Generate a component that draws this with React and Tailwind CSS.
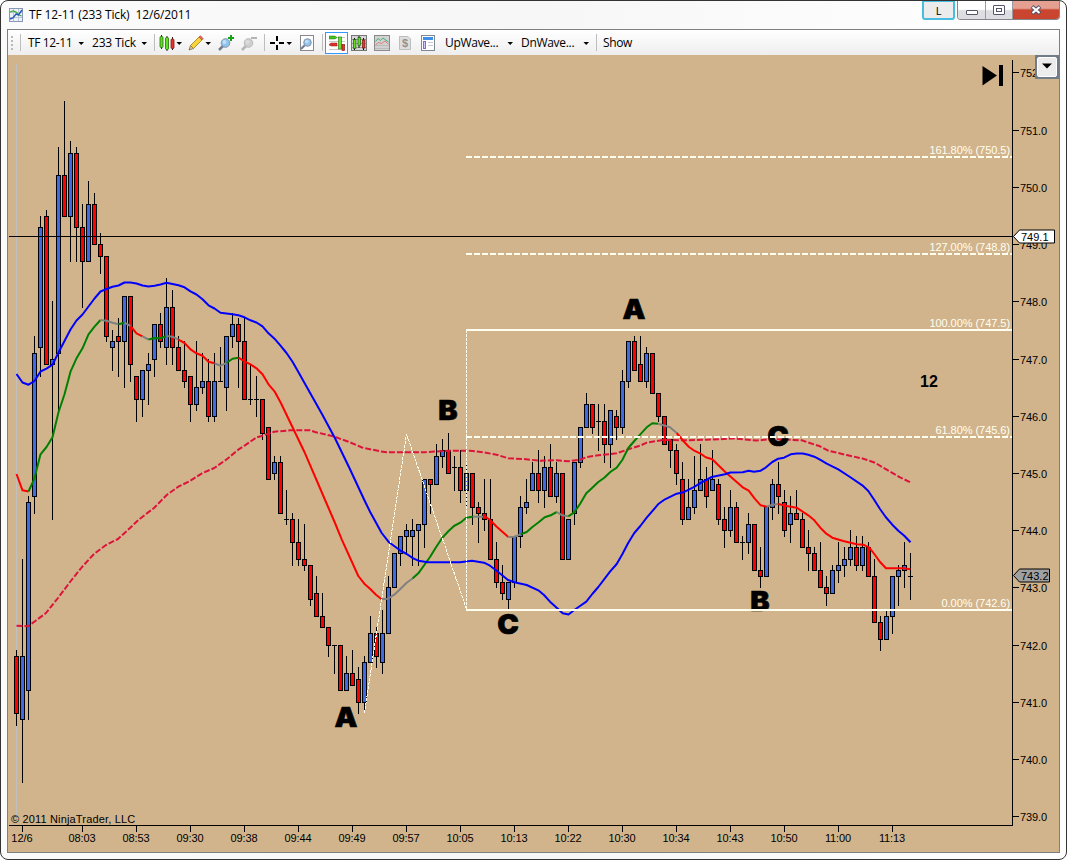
import React from 'react';

// [color, body top, body bottom, high, low], one candle every 6px
const CANDLES = [
  ['r', 656, 713, 650, 726], ['b', 656, 719, 559, 783], ['b', 502, 690, 496, 720], ['b', 353, 496, 336, 514], ['b', 227, 347, 216, 377],
  ['r', 216, 364, 210, 364], ['b', 359, 364, 301, 520], ['b', 175, 353, 147, 411], ['r', 175, 216, 101, 216], ['b', 153, 216, 141, 262],
  ['r', 153, 227, 147, 262], ['r', 227, 261, 204, 308], ['b', 204, 261, 181, 261], ['r', 204, 244, 193, 244], ['r', 244, 256, 233, 274],
  ['r', 256, 336, 256, 342], ['b', 341, 347, 330, 371], ['r', 336, 341, 318, 377], ['b', 296, 341, 296, 388], ['r', 296, 364, 296, 382],
  ['r', 376, 399, 376, 422], ['b', 370, 399, 370, 417], ['b', 364, 370, 353, 405], ['b', 324, 359, 324, 377], ['r', 324, 341, 313, 348],
  ['b', 307, 347, 278, 365], ['r', 307, 347, 290, 365], ['r', 347, 370, 336, 370], ['r', 370, 381, 341, 388], ['r', 376, 404, 376, 422],
  ['b', 387, 404, 341, 411], ['b', 381, 387, 353, 394], ['r', 381, 416, 359, 422], ['b', 381, 416, 353, 422], ['d', 381, 381, 347, 381],
  ['b', 336, 387, 336, 411], ['b', 324, 336, 313, 348], ['r', 324, 341, 318, 388], ['r', 341, 399, 318, 399], ['d', 399, 399, 365, 405],
  ['d', 399, 399, 376, 417], ['r', 399, 433, 399, 440], ['r', 427, 479, 427, 479], ['b', 462, 473, 456, 480], ['r', 462, 513, 456, 513],
  ['d', 519, 519, 490, 525], ['r', 519, 542, 513, 566], ['r', 542, 559, 519, 566], ['r', 559, 565, 524, 571], ['r', 565, 599, 565, 606],
  ['r', 593, 616, 576, 616], ['r', 616, 627, 593, 627], ['r', 627, 645, 627, 657], ['d', 645, 645, 645, 674], ['r', 645, 690, 645, 690],
  ['b', 673, 690, 656, 690], ['r', 673, 685, 650, 685], ['r', 679, 702, 667, 714], ['b', 662, 702, 656, 711], ['b', 633, 662, 616, 662],
  ['r', 633, 656, 627, 668], ['b', 633, 662, 610, 674], ['b', 587, 633, 576, 633], ['b', 553, 587, 553, 587], ['b', 536, 553, 536, 566],
  ['b', 530, 536, 524, 554], ['b', 530, 536, 519, 566], ['b', 524, 530, 524, 566], ['b', 479, 524, 479, 548], ['r', 479, 484, 479, 514],
  ['b', 456, 484, 444, 484], ['b', 450, 456, 439, 468], ['r', 450, 473, 433, 473], ['d', 467, 467, 456, 491], ['r', 467, 490, 450, 503],
  ['b', 473, 490, 465, 506], ['r', 473, 507, 473, 525], ['r', 507, 513, 502, 543], ['r', 513, 519, 479, 531], ['r', 519, 559, 479, 559],
  ['r', 559, 582, 542, 588], ['r', 582, 593, 565, 600], ['b', 582, 599, 582, 609], ['b', 536, 582, 536, 588], ['b', 507, 536, 496, 548],
  ['b', 502, 507, 479, 514], ['b', 473, 490, 462, 490], ['r', 473, 490, 450, 503], ['b', 467, 490, 456, 508], ['r', 467, 496, 444, 496],
  ['b', 473, 496, 462, 503], ['r', 473, 559, 473, 559], ['b', 519, 559, 519, 559], ['b', 462, 513, 462, 525], ['b', 427, 462, 427, 468],
  ['b', 404, 427, 393, 427], ['r', 404, 427, 404, 434], ['d', 421, 421, 404, 451], ['r', 421, 444, 404, 463], ['b', 410, 444, 410, 468],
  ['r', 416, 427, 410, 440], ['b', 381, 427, 370, 434], ['b', 341, 381, 341, 388], ['r', 341, 370, 336, 370], ['r', 364, 381, 336, 381],
  ['b', 353, 381, 347, 388], ['r', 353, 393, 353, 393], ['r', 393, 416, 393, 422], ['r', 416, 444, 416, 444], ['r', 439, 450, 439, 468],
  ['r', 450, 473, 444, 485], ['r', 479, 519, 462, 525], ['b', 507, 519, 479, 519], ['b', 490, 507, 456, 514], ['b', 479, 490, 444, 490],
  ['r', 479, 496, 467, 508], ['b', 479, 490, 450, 490], ['r', 484, 519, 479, 525], ['r', 519, 530, 507, 548], ['b', 507, 530, 490, 537],
  ['r', 507, 542, 502, 542], ['d', 542, 542, 536, 560], ['b', 524, 542, 513, 554], ['r', 524, 570, 524, 570], ['r', 570, 576, 547, 588],
  ['b', 506, 576, 506, 576], ['b', 484, 507, 479, 520], ['r', 484, 496, 462, 514], ['r', 502, 530, 490, 537], ['b', 513, 524, 496, 543],
  ['r', 513, 519, 490, 519], ['r', 519, 547, 513, 547], ['r', 547, 553, 530, 571], ['r', 553, 570, 547, 570], ['r', 570, 587, 542, 587],
  ['r', 587, 593, 576, 606], ['b', 570, 593, 565, 593], ['b', 565, 570, 542, 583], ['b', 559, 565, 547, 577], ['b', 547, 559, 530, 566],
  ['r', 547, 565, 536, 571], ['b', 547, 565, 536, 571], ['r', 547, 576, 542, 576], ['r', 576, 622, 559, 622], ['r', 622, 639, 616, 651],
  ['b', 616, 639, 610, 639], ['b', 576, 616, 576, 634], ['b', 570, 576, 565, 606], ['b', 565, 570, 542, 588], ['d', 576, 576, 553, 600],
];

const SLOW_MA =
  '16.5,374 22.5,382.5 28.5,384.7 34.5,381 40.5,371.5 46.5,368.7 52.5,364.7 58.5,352.5 64.5,341 70.5,329.5 76.5,320.5 82.5,314.5 88.5,306.5 94.5,298.5 100.5,291.5 106.5,289 112.5,286.7 118.5,285.5 124.5,282.5 130.5,282.5 136.5,283.5 142.5,285.5 148.5,286.5 154.5,285.7 160.5,284.5 166.5,282.8 172.5,284 178.5,285.3 184.5,287.3 190.5,291.3 196.5,294.5 202.5,299.3 208.5,305.3 214.5,308.5 220.5,312.7 232.5,314.3 238.5,315.3 244.5,317.3 250.5,320.3 256.5,322.5 262.5,326.3 268.5,333.3 274.5,338.7 280.5,345.7 286.5,353 292.5,361.7 298.5,372.3 310,392.7 322.5,415 335,438.3 350,469.3 364.3,500 370.3,512.3 381.7,533 389,542.3 400,550.3 406.7,554 413.3,558.3 418.3,560.7 428,562.3 460,562.3 472,560.7 484,562.7 490,565.7 496.7,570.7 508,580 514.3,582.3 526.7,585 538.3,590.3 544,595 550,601.7 556.7,607.7 562.7,613.3 568.5,614.5 574.3,610 580,606 586.3,601.7 592.3,594 598.3,587 610,571.7 616.7,564 622.3,554.3 628.3,542.7 634.3,533 640.3,526 646.7,517.7 658.7,503.7 665,499.3 676.7,493.7 683.3,492.3 693.3,487.3 700,483.3 711.7,477 725,474.3 730.3,472.5 742.7,472.3 748.7,470.7 754,471.7 760.7,470.7 766,467.3 772.3,462 778.3,458.7 784,457.7 790.7,454.3 796.7,453.5 802.7,453.5 808.3,454.7 814.3,456.7 820,459.7 826.7,463.7 838.3,469.3 850,477 862.3,485.3 868.3,491 874.3,500 880,509 885.7,517 892.3,524.7 898.3,530.7 904.3,535.7 910.5,542.3';

const LONG_MA =
  '16.5,625.7 28,626.3 35.7,620.7 46,613 58,598 70,582 82,567 94,554 106,545 118,539 130,528 138.3,520 154.3,507.7 166.7,495 178.3,486.7 190,481 202,473.3 214.3,468 226.7,459.3 238.3,449.7 245,445.3 256.7,437.3 261.7,436 274.3,431.7 290,430.3 310,430.3 315,432 333.3,436.3 350,442.3 362,447.5 380,451.3 386.7,452.3 424.3,452.3 448.3,450.7 470,450.7 483.3,452.3 496.7,454.7 508.3,458.3 523.3,459 540,460.7 556.7,460.3 568.3,461.3 580,459.7 586.7,457 598.3,455.3 616.7,453.3 628.3,449.3 640,445.7 646.7,442.7 663.3,440 690,440.3 706.7,439.7 720,439.3 733.3,438.3 756.7,440.5 773,439 801.7,440.3 820,446.3 828.3,450.7 846.7,455 863.3,458.7 875,462.7 886.7,469.7 900,477.3 910.3,482.3';

const FAST_MA = [
  ['red', '16.5,474 22.5,490.3 28.5,491.5'],
  ['green', '28.5,491.5 34.5,478.3 40.5,454.3 46.5,447 52.5,437.3 58.5,412.3 64.5,394.3 70.5,371.7 76.5,358.3 82.5,348.3 88.5,334.3 94.5,326.7 100.5,320'],
  ['gray', '100.5,320 106.5,320.7 112.5,322.7 118.5,324.3'],
  ['green', '118.5,324.3 124.5,322.7'],
  ['gray', '124.5,322.7 130.5,326'],
  ['red', '130.5,326 136.5,333.3 142.5,336.3'],
  ['gray', '142.5,336.3 148.5,339.5'],
  ['green', '148.5,339.5 154.5,338 160.5,338.3 166.5,336'],
  ['gray', '166.5,336 172.5,336.7 178.5,339.7'],
  ['red', '178.5,339.7 184.5,343 190.5,349.3 196.5,353.3 202.5,355.7 208.5,361.7 214.5,363.3'],
  ['gray', '214.5,363.3 220.5,365.7 226.5,363'],
  ['green', '226.5,363 232.5,358.7 238.5,357.7'],
  ['red', '238.5,357.7 244.5,361.3 250.5,364.3 256.5,368.3 262.5,374.3 268.5,384.3 274.5,391.3 281,403.3 304.3,451.7 325.3,500.5 335,523 341.7,539.3 358.3,576 364.3,583.7 370,588.7 376,594.7 381.7,599.3'],
  ['gray', '381.7,599.3 388,598.7 394.3,594.7 400.3,589 406.7,582.7 412.5,578.5'],
  ['green', '412.5,578.5 418.3,573.3 424.3,565 430,557 435.7,547.7 442.3,537.7 448.3,531.3 454,526 460.3,522.7 466.3,517.7 472.7,516.7'],
  ['gray', '472.7,516.7 483.3,516.7'],
  ['red', '483.3,516.7 486,517 490.3,520.3 496.7,526.7 508.3,537'],
  ['gray', '508.3,537 514.3,536.7 520.7,534.3'],
  ['green', '520.7,534.3 526.7,532 532.7,526.7 538.7,522.3 544.7,517.3 550.7,515.3 556.7,512'],
  ['gray', '556.7,512 562.3,515.3 568.3,516.3'],
  ['green', '568.3,516.3 574.3,512.3 580,504 586.3,493.3 592.3,487.7 598.3,482 604.3,477.7 610.3,472 616.7,467.7 622.3,460 628.3,448 634.3,441 640.3,434.3 646.7,427.3 652.3,423.3 658.3,423.7'],
  ['gray', '658.3,423.7 670,427.3 676.7,433'],
  ['red', '676.7,433 683.3,441 689,447 694.3,450.7 700,453.3 705.7,457.3 712.3,459.3 725,471.7 742.7,487.3 748.7,490.7 754.7,498.7 760.7,505.3 766.7,506.7'],
  ['gray', '766.7,506.7 772.3,504.7 778.3,504'],
  ['red', '778.3,504 786.7,506 796.7,507.7 808.3,515.3 814.3,520.3 820.3,527.7 826.3,533.7 832.3,537.7 843.3,541 856.7,544.3 863.3,544.7 869.3,547.7 874.3,554 880.3,562.3 886,568.3 903.3,568.3 910.3,569.3'],
];

const FIBS = [
  { y: 157, label: '161.80% (750.5)', dashed: true },
  { y: 254, label: '127.00% (748.8)', dashed: true },
  { y: 330, label: '100.00% (747.5)', dashed: false },
  { y: 437, label: '61.80% (745.6)', dashed: true },
  { y: 610, label: '0.00% (742.6)', dashed: false },
];

const PRICES = [752, 751, 750, 749, 748, 747, 746, 745, 744, 743, 742, 741, 740, 739];

const TIMES = ['08:03', '08:53', '09:30', '09:38', '09:44', '09:49', '09:57', '10:05', '10:13', '10:22', '10:30', '10:34', '10:43', '10:50', '11:00', '11:13'];

const WAVES = [
  ['A', 346, 727],
  ['B', 448, 420],
  ['C', 508, 634],
  ['A', 634, 319],
  ['B', 760, 611],
  ['C', 778, 446],
];

const priceY = (price) => Math.round(72.49 + (752 - price) * 57.21);

const Candle = ({ x, data }) => {
  const [kind, top, bottom, high, low] = data;
  return (
    <g>
      <rect x={x} y={high} width="1" height={Math.max(low - high, 1)} fill="#000" />
      {kind === 'd' ? (
        <rect x={x - 2} y={top} width="5" height="1" fill="#000" />
      ) : (
        <>
          <rect x={x - 2} y={top} width="5" height={bottom - top + 1} fill="#000" />
          <rect x={x - 1} y={top + 1} width="3" height={bottom - top - 1} fill={kind === 'r' ? '#ff0000' : '#4169e1'} />
        </>
      )}
    </g>
  );
};

const PriceTag = ({ y, right, fill, text }) => (
  <g>
    <path d={`M1013.5 ${y} L1019.5 ${y - 6.5} H${right} V${y + 6.5} H1019.5 Z`} fill={fill} stroke="#000" />
    <text x="1021" y={y + 4.5} fill="#000">{text}</text>
  </g>
);

const Chart = () => (
  <svg viewBox="8 55 1051 797" width="1051" height="797" className="block bg-[#d2b48c] font-['Liberation_Sans',sans-serif] text-[11px]">
    <rect x="16" y="64" width="1" height="754" fill="#c0c0c0" />
    <g shapeRendering="crispEdges">
      {CANDLES.map((c, i) => (
        <Candle key={i} x={16 + i * 6} data={c} />
      ))}
    </g>

    {/* Moving averages */}
    <g fill="none" strokeWidth="2" strokeLinejoin="round">
      <polyline points={LONG_MA} stroke="#dc143c" strokeDasharray="6 2" />
      {FAST_MA.map(([stroke, points]) => (
        <polyline key={points} points={points} stroke={stroke} />
      ))}
      <polyline points={SLOW_MA} stroke="#0000ff" />
    </g>

    {WAVES.map(([letter, x, y]) => (
      <text
        key={x}
        transform={`translate(${x} ${y}) scale(1.07 1)`}
        textAnchor="middle"
        stroke="#000"
        strokeWidth=".6"
        className="font-['Inter',sans-serif] text-[27px] font-black"
      >
        {letter}
      </text>
    ))}
    <text x="920" y="387" className="text-[16px] font-bold">12</text>

    {/* Fibonacci extensions */}
    <g stroke="#fffff0" fill="none" shapeRendering="crispEdges">
      <path d="M364.5 713 L406.5 434 L466.5 609" strokeDasharray="3 1" />
      <path d="M466.5 330 V610" strokeDasharray="3 1" />
      {FIBS.map((f) => (
        <path key={f.y} d={`M466 ${f.y} H1012`} strokeWidth="2" strokeDasharray={f.dashed ? '6 2' : undefined} />
      ))}
    </g>
    {FIBS.map((f) => (
      <text key={f.y} x="1010" y={f.y - 3} textAnchor="end" fill="#fffff0" className="tracking-[-0.05px]">{f.label}</text>
    ))}

    {/* Axes */}
    <g fill="#000" shapeRendering="crispEdges">
      <rect x="9" y="236" width="1004" height="1" />
      <rect x="1012" y="60" width="1" height="766" />
      <rect x="9" y="825" width="1004" height="1" />
      <rect x="22" y="826" width="1" height="6" />
      {TIMES.map((t, i) => (
        <rect key={t} x={82 + i * 54} y="826" width="1" height="6" />
      ))}
      {PRICES.map((p) => (
        <rect key={p} x="1013" y={priceY(p)} width="6" height="1" />
      ))}
    </g>
    {PRICES.map((p) => (
      <text key={p} x="1020" y={priceY(p) + 5} className="tracking-[-0.1px]">{p.toFixed(1)}</text>
    ))}
    <text x="22" y="842" textAnchor="middle">12/6</text>
    {TIMES.map((t, i) => (
      <text key={t} x={82 + i * 54} y="842" textAnchor="middle" className="tracking-[-0.1px]">{t}</text>
    ))}
    <text x="11" y="823" className="tracking-[0.16px]">© 2011 NinjaTrader, LLC</text>

    <PriceTag y={236.5} right={1054.5} fill="#fff" text="749.1" />
    <PriceTag y={575.5} right={1049.5} fill="#a0a0a0" text="743.2" />

    <path d="M982.5 66 L997 75.5 L982.5 85.5 Z" />
    <rect x="999" y="65" width="4" height="21" />
  </svg>
);

const Arrow = () => (
  <svg viewBox="0 0 8 16" className="h-4 w-2 shrink-0">
    <path d="M1.5 7 H7 L4.2 10 Z" />
  </svg>
);

const Sep = ({ className = '' }) => <div className={`h-[17px] w-px shrink-0 bg-[#bdbdbd] ${className}`} />;

const Icon = ({ className = '', children }) => (
  <svg viewBox="0 0 16 16" className={`h-4 w-4 shrink-0 ${className}`}>{children}</svg>
);

const Lens = ({ gray }) => (
  <>
    <path d="M1 15 L5.5 10.5" stroke={gray ? '#b5b5b5' : '#6f7f90'} strokeWidth="2.5" />
    <circle cx="7.5" cy="8" r="4.3" fill={gray ? '#cfcfcf' : '#8fc4ee'} stroke={gray ? '#b8b8b8' : '#8795a5'} />
    <circle cx="6.5" cy="7" r="2" fill={gray ? '#dcdcdc' : '#bfe0f8'} />
  </>
);

const Toolbar = () => (
  <div className="flex h-[25px] shrink-0 items-center bg-gradient-to-b from-white to-[#eeeeee] font-['Open_Sans',sans-serif] text-[12px] leading-4 text-black">
    <div className="ml-[3px] grid w-[9px] gap-[2px]">
      {[0, 1, 2, 3].map((i) => (
        <div key={i} className="h-[2px] w-[2px] bg-[#b9b9b9]" />
      ))}
    </div>
    <Sep />
    <div className="ml-[7px] w-[49px] whitespace-nowrap tracking-[-0.38px]">TF 12-11</div>
    <Arrow />
    <div className="ml-[7px] w-[48px] whitespace-nowrap tracking-[-0.2px]">233 Tick</div>
    <Arrow />
    <Sep className="ml-[6px]" />
    {/* Chart style */}
    <Icon className="ml-1">
      <path d="M2.5 0V14M8 1V16M13.5 2V15" stroke="#222" />
      <rect x="1" y="1.5" width="3" height="11" rx="1" fill="#5fe01d" stroke="#236b10" strokeWidth=".8" />
      <rect x="6.5" y="2.5" width="3" height="12" rx="1" fill="#5fe01d" stroke="#236b10" strokeWidth=".8" />
      <rect x="12" y="4" width="3" height="9.5" rx="1" fill="#e8342c" stroke="#7c1714" strokeWidth=".8" />
    </Icon>
    <Arrow />
    {/* Drawing tools */}
    <Icon className="ml-[5px]">
      <path d="M1 15 L2.5 10.5 L5.5 13.5 Z" fill="#d8c4a0" stroke="#6b5a33" strokeWidth=".7" />
      <path d="M2.5 10.5 L11 2 L14 5 L5.5 13.5 Z" fill="#f6d43a" stroke="#a07d1a" strokeWidth=".8" />
      <path d="M11 2 L12.5 .8 L15.2 3.6 L14 5 Z" fill="#ec6d62" stroke="#a8403b" strokeWidth=".6" />
    </Icon>
    <Arrow />
    <Icon className="ml-[6px]">
      <Lens />
      <path d="M13 0V6M10 3H16" stroke="#16a316" strokeWidth="2" />
    </Icon>
    <Icon className="ml-[7px]">
      <Lens gray />
      <path d="M10 3H16" stroke="#b5b5b5" strokeWidth="2" />
    </Icon>
    <Sep className="ml-[7px]" />
    {/* Crosshair */}
    <Icon className="ml-1">
      <path d="M8 1V6M8 10V15M1 8H6M10 8H15" stroke="#000" strokeWidth="2" shapeRendering="crispEdges" />
    </Icon>
    <Arrow />
    <Icon className="ml-[6px]">
      <rect x="1.5" y=".5" width="13" height="15" fill="#fff" stroke="#888" />
      <path d="M2 14 L6 10" stroke="#6f7f90" strokeWidth="2.2" />
      <circle cx="8.5" cy="7.5" r="3.8" fill="#8fc4ee" stroke="#8795a5" />
      <circle cx="7.8" cy="6.6" r="1.8" fill="#bfe0f8" />
    </Icon>
    <Sep className="ml-[7px]" />
    <div className="ml-[2px] flex h-[22px] w-[23px] shrink-0 items-center justify-center border border-[#3399ff] bg-white">
      <Icon>
        <path d="M0 2.5H16M0 6.5H16M0 10.5H16M0 14.5H16" stroke="#c9c9c9" />
        <path d="M0 1H6L8 2.5L6 4H0Z" fill="#43c01c" stroke="#277a12" strokeWidth=".5" />
        <path d="M0 9.5L2 8H8V11H2Z" fill="#e23128" stroke="#8c1914" strokeWidth=".5" />
        <rect x="9.5" y="2" width="3" height="12" fill="#6be02a" stroke="#2d7c16" strokeWidth=".7" />
        <rect x="13" y="9.5" width="2.5" height="6" fill="#e8342c" stroke="#8c1914" strokeWidth=".7" />
      </Icon>
    </div>
    <Icon className="ml-[3px]">
      <rect x=".5" y=".5" width="15" height="15" fill="#d5d5d5" stroke="#777" />
      <path d="M1 4.5H15M1 8.5H15M1 12.5H15" stroke="#999" />
      <path d="M3.5 3V15M8 1V13M12.5 3V15" stroke="#111" />
      <rect x="2.5" y="4.5" width="2.4" height="9" fill="#5fe01d" stroke="#1d5e0c" strokeWidth=".7" />
      <rect x="7" y="2.5" width="2.4" height="8" fill="#5fe01d" stroke="#1d5e0c" strokeWidth=".7" />
      <rect x="11.5" y="5" width="2.4" height="8" fill="#e8342c" stroke="#7c1714" strokeWidth=".7" />
    </Icon>
    <Icon className="ml-[7px]">
      <rect x=".5" y=".5" width="15" height="15" fill="#d2d2d2" stroke="#8a8a8a" />
      <path d="M1 10.5H15M1 13.5H15" stroke="#bbb" />
      <path d="M1.5 6.5 L4 3.5 L6.5 5.5 L9 3 L14.5 7" fill="none" stroke="#39b57a" />
      <path d="M1.5 10 L4.5 7.5 L7.5 8.5 L11 6 L14.5 9" fill="none" stroke="#df7b7b" />
    </Icon>
    <Icon className="ml-[7px]">
      <path d="M2.5 1.5 H11 L13.5 4 V14.5 H2.5 Z" fill="#dedede" stroke="#bdbdbd" />
      <text x="8" y="12" textAnchor="middle" fill="#929292" className="font-['Liberation_Sans',sans-serif] text-[11px] font-bold">$</text>
    </Icon>
    <Icon className="ml-[7px]">
      <rect x="1.5" y=".5" width="13" height="15" fill="#fff" stroke="#7f8794" />
      <rect x="3" y="2" width="10" height="3" fill="#3d8fe8" />
      <rect x="3.5" y="6.5" width="2" height="7" fill="#d9c7ff" stroke="#9361e6" />
      <path d="M8 7.5H13M8 10.5H13" stroke="#c2cad8" />
    </Icon>
    <div className="ml-[9px] w-[61px] whitespace-nowrap tracking-[-0.3px]">UpWave...</div>
    <Arrow />
    <div className="ml-[7px] w-[61px] whitespace-nowrap tracking-[-0.3px]">DnWave...</div>
    <Arrow />
    <Sep className="ml-[6px]" />
    <div className="ml-[6px] tracking-[-0.4px]">Show</div>
  </div>
);

const TitleBar = () => (
  <div className="flex h-[28px] shrink-0 items-start">
    <svg viewBox="0 0 14 14" className="mt-[7px] ml-2 h-[14px] w-[14px] shrink-0">
      <rect x=".5" y=".5" width="13" height="13" fill="#eef2f8" stroke="#8998b8" />
      <path d="M4.5 1V13M9.5 1V13M1 4.5H13M1 9.5H13" stroke="#bcc6da" />
      <path d="M1 4 L4 3 L7 4 L9 6.5 L12.5 8" fill="none" stroke="#36a93a" strokeWidth="1.3" />
      <path d="M1 11 L4 10 L7 6 L9.5 7 L13 2" fill="none" stroke="#2458b8" strokeWidth="1.4" />
    </svg>
    <div className="mt-[6px] ml-[6px] flex-1 font-['Open_Sans',sans-serif] text-[12px] leading-4 tracking-[-0.12px] whitespace-pre text-black">TF 12-11 (233 Tick)  12/6/2011</div>
    <button className="mr-[2px] h-[19px] w-[33px] rounded-b-[3px] border-2 border-t border-[#48bde0] bg-[#ececec] font-['Open_Sans',sans-serif] text-[11px] leading-[15px] text-black">L</button>
    <div className="mr-[6px] flex h-[19px] overflow-hidden rounded-b-[4px] border border-t-0 border-[#85858c]">
      <button className="flex w-[28px] items-center justify-center border-r border-[#9a9aa2] bg-gradient-to-b from-white from-45% to-[#dedee2] to-55%">
        <div className="mt-1 h-[5px] w-3 rounded-[1px] border border-[#55566a] bg-white" />
      </button>
      <button className="flex w-[27px] items-center justify-center border-r border-[#9a9aa2] bg-gradient-to-b from-white from-45% to-[#dedee2] to-55%">
        <div className="flex h-[10px] w-3 items-center justify-center rounded-[1px] border border-[#55566a] bg-white">
          <div className="h-1 w-[6px] border border-[#55566a]" />
        </div>
      </button>
      <button className="flex w-[46px] items-center justify-center bg-gradient-to-b from-[#e5a091] from-40% to-[#c9452f] to-50%">
        <svg viewBox="0 0 12 10" className="h-[10px] w-3">
          <path d="M2 1.5 L10 8.5 M10 1.5 L2 8.5" stroke="#51536b" strokeWidth="4" />
          <path d="M2.5 2 L9.5 8 M9.5 2 L2.5 8" stroke="#fff" strokeWidth="2.2" />
        </svg>
      </button>
    </div>
  </div>
);

export default function App() {
  return (
    <div className="h-[860px] w-[1067px] overflow-hidden bg-white">
      <div className="flex h-[860px] w-[1067px] flex-col rounded-[8px] border border-[#333] bg-gradient-to-r from-[#fbfbfb] via-[#f7f7f7] to-white">
        <TitleBar />
        <div className="relative mx-[6px] flex h-[824px] w-[1053px] flex-col border border-[#7f7f7f]">
          <Toolbar />
          <Chart />
          <div className="absolute top-[25px] right-0 flex h-[24px] w-[24px] items-center justify-center bg-[#717c87]">
            <div className="flex h-[20px] w-[20px] items-center justify-center rounded-[2px] border border-white bg-[#ececec]">
              <svg viewBox="0 0 10 6" className="mb-[2px] h-[6px] w-[10px]">
                <path d="M0 .5H10L5 5.5Z" />
              </svg>
            </div>
          </div>
        </div>
      </div>
    </div>
  );
}
